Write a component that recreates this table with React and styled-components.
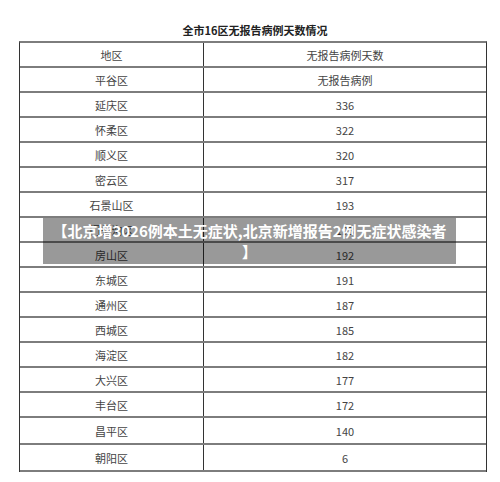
import React from "react";
import styled, { createGlobalStyle } from "styled-components";

const rows = [
  { area: "平谷区", days: "无报告病例" },
  { area: "延庆区", days: "336" },
  { area: "怀柔区", days: "322" },
  { area: "顺义区", days: "320" },
  { area: "密云区", days: "317" },
  { area: "石景山区", days: "193" },
  { area: "门头沟区", days: "193" },
  { area: "房山区", days: "192" },
  { area: "东城区", days: "191" },
  { area: "通州区", days: "187" },
  { area: "西城区", days: "185" },
  { area: "海淀区", days: "182" },
  { area: "大兴区", days: "177" },
  { area: "丰台区", days: "172" },
  { area: "昌平区", days: "140", h: 27 },
  { area: "朝阳区", days: "6", h: 27 },
];

const GlobalStyle = createGlobalStyle`
  body {
    margin: 0;
    background: #fff;
    font-family: "Noto Sans CJK SC", "Noto Sans", sans-serif;
  }
`;

const App = () => {
  return (
    <>
      <GlobalStyle />
      <Page>
        <Title>全市16区无报告病例天数情况</Title>
        <Table>
          <Row>
            <Cell>地区</Cell>
            <Cell>无报告病例天数</Cell>
          </Row>
          {rows.map((r) => (
            <Row key={r.area} $h={r.h}>
              <Cell>{r.area}</Cell>
              <Cell>{r.days}</Cell>
            </Row>
          ))}
        </Table>
        <Banner>
          【北京增3026例本土无症状,北京新增报告2例无症状感染者
          <br />】
        </Banner>
      </Page>
    </>
  );
};

const Page = styled.div`
  position: relative;
  width: 500px;
  height: 482px;
  padding: 0 13px 0 19px;
  box-sizing: border-box;
`;

const Title = styled.div`
  padding-top: 22px;
  margin-bottom: 3px;
  line-height: 16px;
  font-size: 11px;
  font-weight: 700;
  color: #222;
  text-align: center;
  padding-left: 4px;
`;

const Table = styled.div`
  border-top: 2px solid #7d7d7d;
  border-left: 1px solid #333;
  border-right: 1px solid #333;
`;

const Row = styled.div`
  display: grid;
  grid-template-columns: 183px 1fr;
  height: ${(p) => p.$h || 25}px;
  box-sizing: border-box;
  border-bottom: 2px solid #7d7d7d;
`;

const Cell = styled.div`
  display: flex;
  align-items: center;
  justify-content: center;
  font-size: 11px;
  color: #444;
  & + & {
    border-left: 1px solid #333;
  }
`;

const Banner = styled.div`
  position: absolute;
  left: 43px;
  top: 218px;
  width: 413px;
  height: 46px;
  box-sizing: border-box;
  padding-top: 2px;
  background: rgba(0, 0, 0, 0.4);
  color: #fff;
  font-size: 15px;
  font-weight: 700;
  line-height: 21px;
  text-align: center;
  white-space: nowrap;
`;

export default App;
